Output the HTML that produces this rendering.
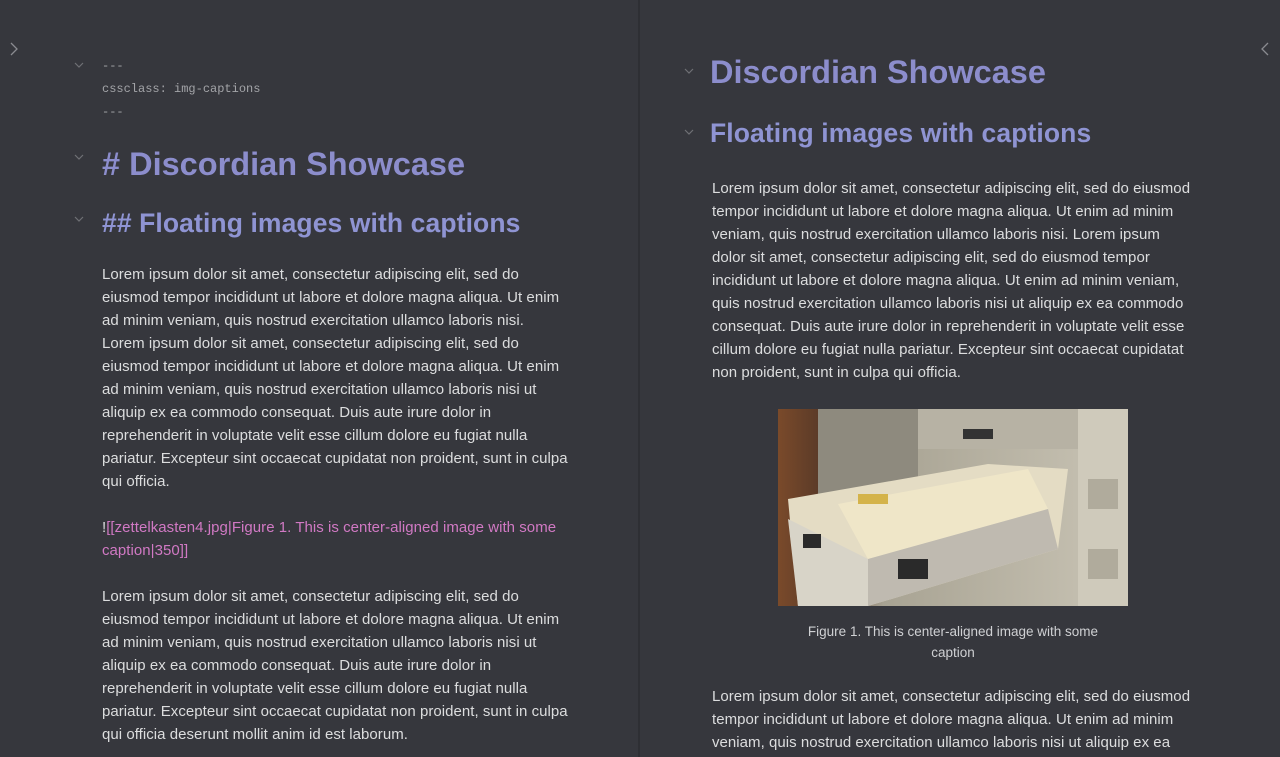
<!DOCTYPE html>
<html><head><meta charset="utf-8"><style>
*{margin:0;padding:0;box-sizing:border-box}
body{width:1280px;height:757px;background:#36373d;overflow:hidden;font-family:"Liberation Sans",sans-serif;color:#dcddde;position:relative}
.div{position:absolute;left:638px;top:0;width:2px;height:757px;background:#2e2f34}
.t{position:absolute;white-space:nowrap}
.mono{font-family:"Liberation Mono",monospace;font-size:12px;color:#a3a4a8}
.h1{font-weight:bold;font-size:32.5px;color:#8c8dcc}
.h2{font-weight:bold;font-size:26.5px;color:#8f94d3;letter-spacing:0.1px}
.p{font-size:15px;line-height:23px;color:#dcddde;letter-spacing:0.04px}
.chev{position:absolute}
.pink{color:#d179c4}
</style></head><body>
<div class="div"></div>
<svg style="position:absolute;left:9px;top:41px" width="12" height="16"><path d="M2 2 L8 8 L2 14" stroke="#8a8b90" stroke-width="1.3" fill="none"/></svg>
<svg style="position:absolute;left:1259px;top:41px" width="12" height="16"><path d="M9 2 L3 8 L9 14" stroke="#8a8b90" stroke-width="1.3" fill="none"/></svg>
<svg class="chev" style="left:74px;top:62px" width="10" height="6"><path d="M1 1 L5 5 L9 1" stroke="#6f7075" stroke-width="1.2" fill="none"/></svg>
<svg class="chev" style="left:74px;top:154px" width="10" height="6"><path d="M1 1 L5 5 L9 1" stroke="#6f7075" stroke-width="1.2" fill="none"/></svg>
<svg class="chev" style="left:74px;top:216px" width="10" height="6"><path d="M1 1 L5 5 L9 1" stroke="#6f7075" stroke-width="1.2" fill="none"/></svg>
<svg class="chev" style="left:684px;top:68px" width="10" height="6"><path d="M1 1 L5 5 L9 1" stroke="#6f7075" stroke-width="1.2" fill="none"/></svg>
<svg class="chev" style="left:684px;top:129px" width="10" height="6"><path d="M1 1 L5 5 L9 1" stroke="#6f7075" stroke-width="1.2" fill="none"/></svg>

<div class="t mono" style="left:102px;top:59px">---</div>
<div class="t mono" style="left:102px;top:82px">cssclass: img-captions</div>
<div class="t mono" style="left:102px;top:105px">---</div>
<div class="t h1" style="left:102px;top:146px"># Discordian Showcase</div>
<div class="t h2" style="left:102px;top:208px">## Floating images with captions</div>
<div class="t p" style="left:102px;top:263px">Lorem ipsum dolor sit amet, consectetur adipiscing elit, sed do<br>eiusmod tempor incididunt ut labore et dolore magna aliqua. Ut enim<br>ad minim veniam, quis nostrud exercitation ullamco laboris nisi.<br>Lorem ipsum dolor sit amet, consectetur adipiscing elit, sed do<br>eiusmod tempor incididunt ut labore et dolore magna aliqua. Ut enim<br>ad minim veniam, quis nostrud exercitation ullamco laboris nisi ut<br>aliquip ex ea commodo consequat. Duis aute irure dolor in<br>reprehenderit in voluptate velit esse cillum dolore eu fugiat nulla<br>pariatur. Excepteur sint occaecat cupidatat non proident, sunt in culpa<br>qui officia.</div>
<div class="t p" style="left:102px;top:516px">!<span class="pink">[[zettelkasten4.jpg|Figure 1. This is center-aligned image with some<br>caption|350]]</span></div>
<div class="t p" style="left:102px;top:585px">Lorem ipsum dolor sit amet, consectetur adipiscing elit, sed do<br>eiusmod tempor incididunt ut labore et dolore magna aliqua. Ut enim<br>ad minim veniam, quis nostrud exercitation ullamco laboris nisi ut<br>aliquip ex ea commodo consequat. Duis aute irure dolor in<br>reprehenderit in voluptate velit esse cillum dolore eu fugiat nulla<br>pariatur. Excepteur sint occaecat cupidatat non proident, sunt in culpa<br>qui officia deserunt mollit anim id est laborum.</div>

<div class="t h1" style="left:710px;top:54px">Discordian Showcase</div>
<div class="t h2" style="left:710px;top:118px">Floating images with captions</div>
<div class="t p" style="left:712px;top:177px">Lorem ipsum dolor sit amet, consectetur adipiscing elit, sed do eiusmod<br>tempor incididunt ut labore et dolore magna aliqua. Ut enim ad minim<br>veniam, quis nostrud exercitation ullamco laboris nisi. Lorem ipsum<br>dolor sit amet, consectetur adipiscing elit, sed do eiusmod tempor<br>incididunt ut labore et dolore magna aliqua. Ut enim ad minim veniam,<br>quis nostrud exercitation ullamco laboris nisi ut aliquip ex ea commodo<br>consequat. Duis aute irure dolor in reprehenderit in voluptate velit esse<br>cillum dolore eu fugiat nulla pariatur. Excepteur sint occaecat cupidatat<br>non proident, sunt in culpa qui officia.</div>

<svg style="position:absolute;left:778px;top:409px" width="350" height="197" viewBox="0 0 350 197">
<defs><linearGradient id="bg" x1="0" x2="1"><stop offset="0" stop-color="#7a4a2a"/><stop offset="0.12" stop-color="#5a3a28"/><stop offset="0.3" stop-color="#a8a393"/><stop offset="1" stop-color="#c9c4b5"/></linearGradient></defs>
<rect width="350" height="197" fill="url(#bg)"/>
<rect x="40" y="0" width="100" height="90" fill="#8e8a7e"/>
<rect x="140" y="0" width="160" height="40" fill="#b7b2a4"/>
<rect x="300" y="0" width="50" height="197" fill="#cfcabb"/>
<rect x="310" y="70" width="30" height="30" fill="#b0ab9c"/>
<rect x="310" y="140" width="30" height="30" fill="#b0ab9c"/>
<polygon points="10,90 210,55 290,60 280,140 90,197 20,197" fill="#e4dcc4"/>
<polygon points="60,95 250,60 270,100 90,150" fill="#efe6c8"/>
<polygon points="10,110 90,150 90,197 20,197" fill="#d8d4c8"/>
<polygon points="90,150 270,100 280,140 90,197" fill="#bfbab0"/>
<rect x="120" y="150" width="30" height="20" fill="#2a2a2a"/>
<rect x="25" y="125" width="18" height="14" fill="#2a2a2a"/>
<rect x="80" y="85" width="30" height="10" fill="#d4b34a"/>
<rect x="185" y="20" width="30" height="10" fill="#333"/>
</svg>
<div class="t" style="left:778px;width:350px;top:621px;text-align:center;font-size:13.5px;line-height:21px;color:#cfd0d3;white-space:normal">Figure 1. This is center-aligned image with some<br>caption</div>
<div class="t p" style="left:712px;top:685px">Lorem ipsum dolor sit amet, consectetur adipiscing elit, sed do eiusmod<br>tempor incididunt ut labore et dolore magna aliqua. Ut enim ad minim<br>veniam, quis nostrud exercitation ullamco laboris nisi ut aliquip ex ea</div>
</body></html>
